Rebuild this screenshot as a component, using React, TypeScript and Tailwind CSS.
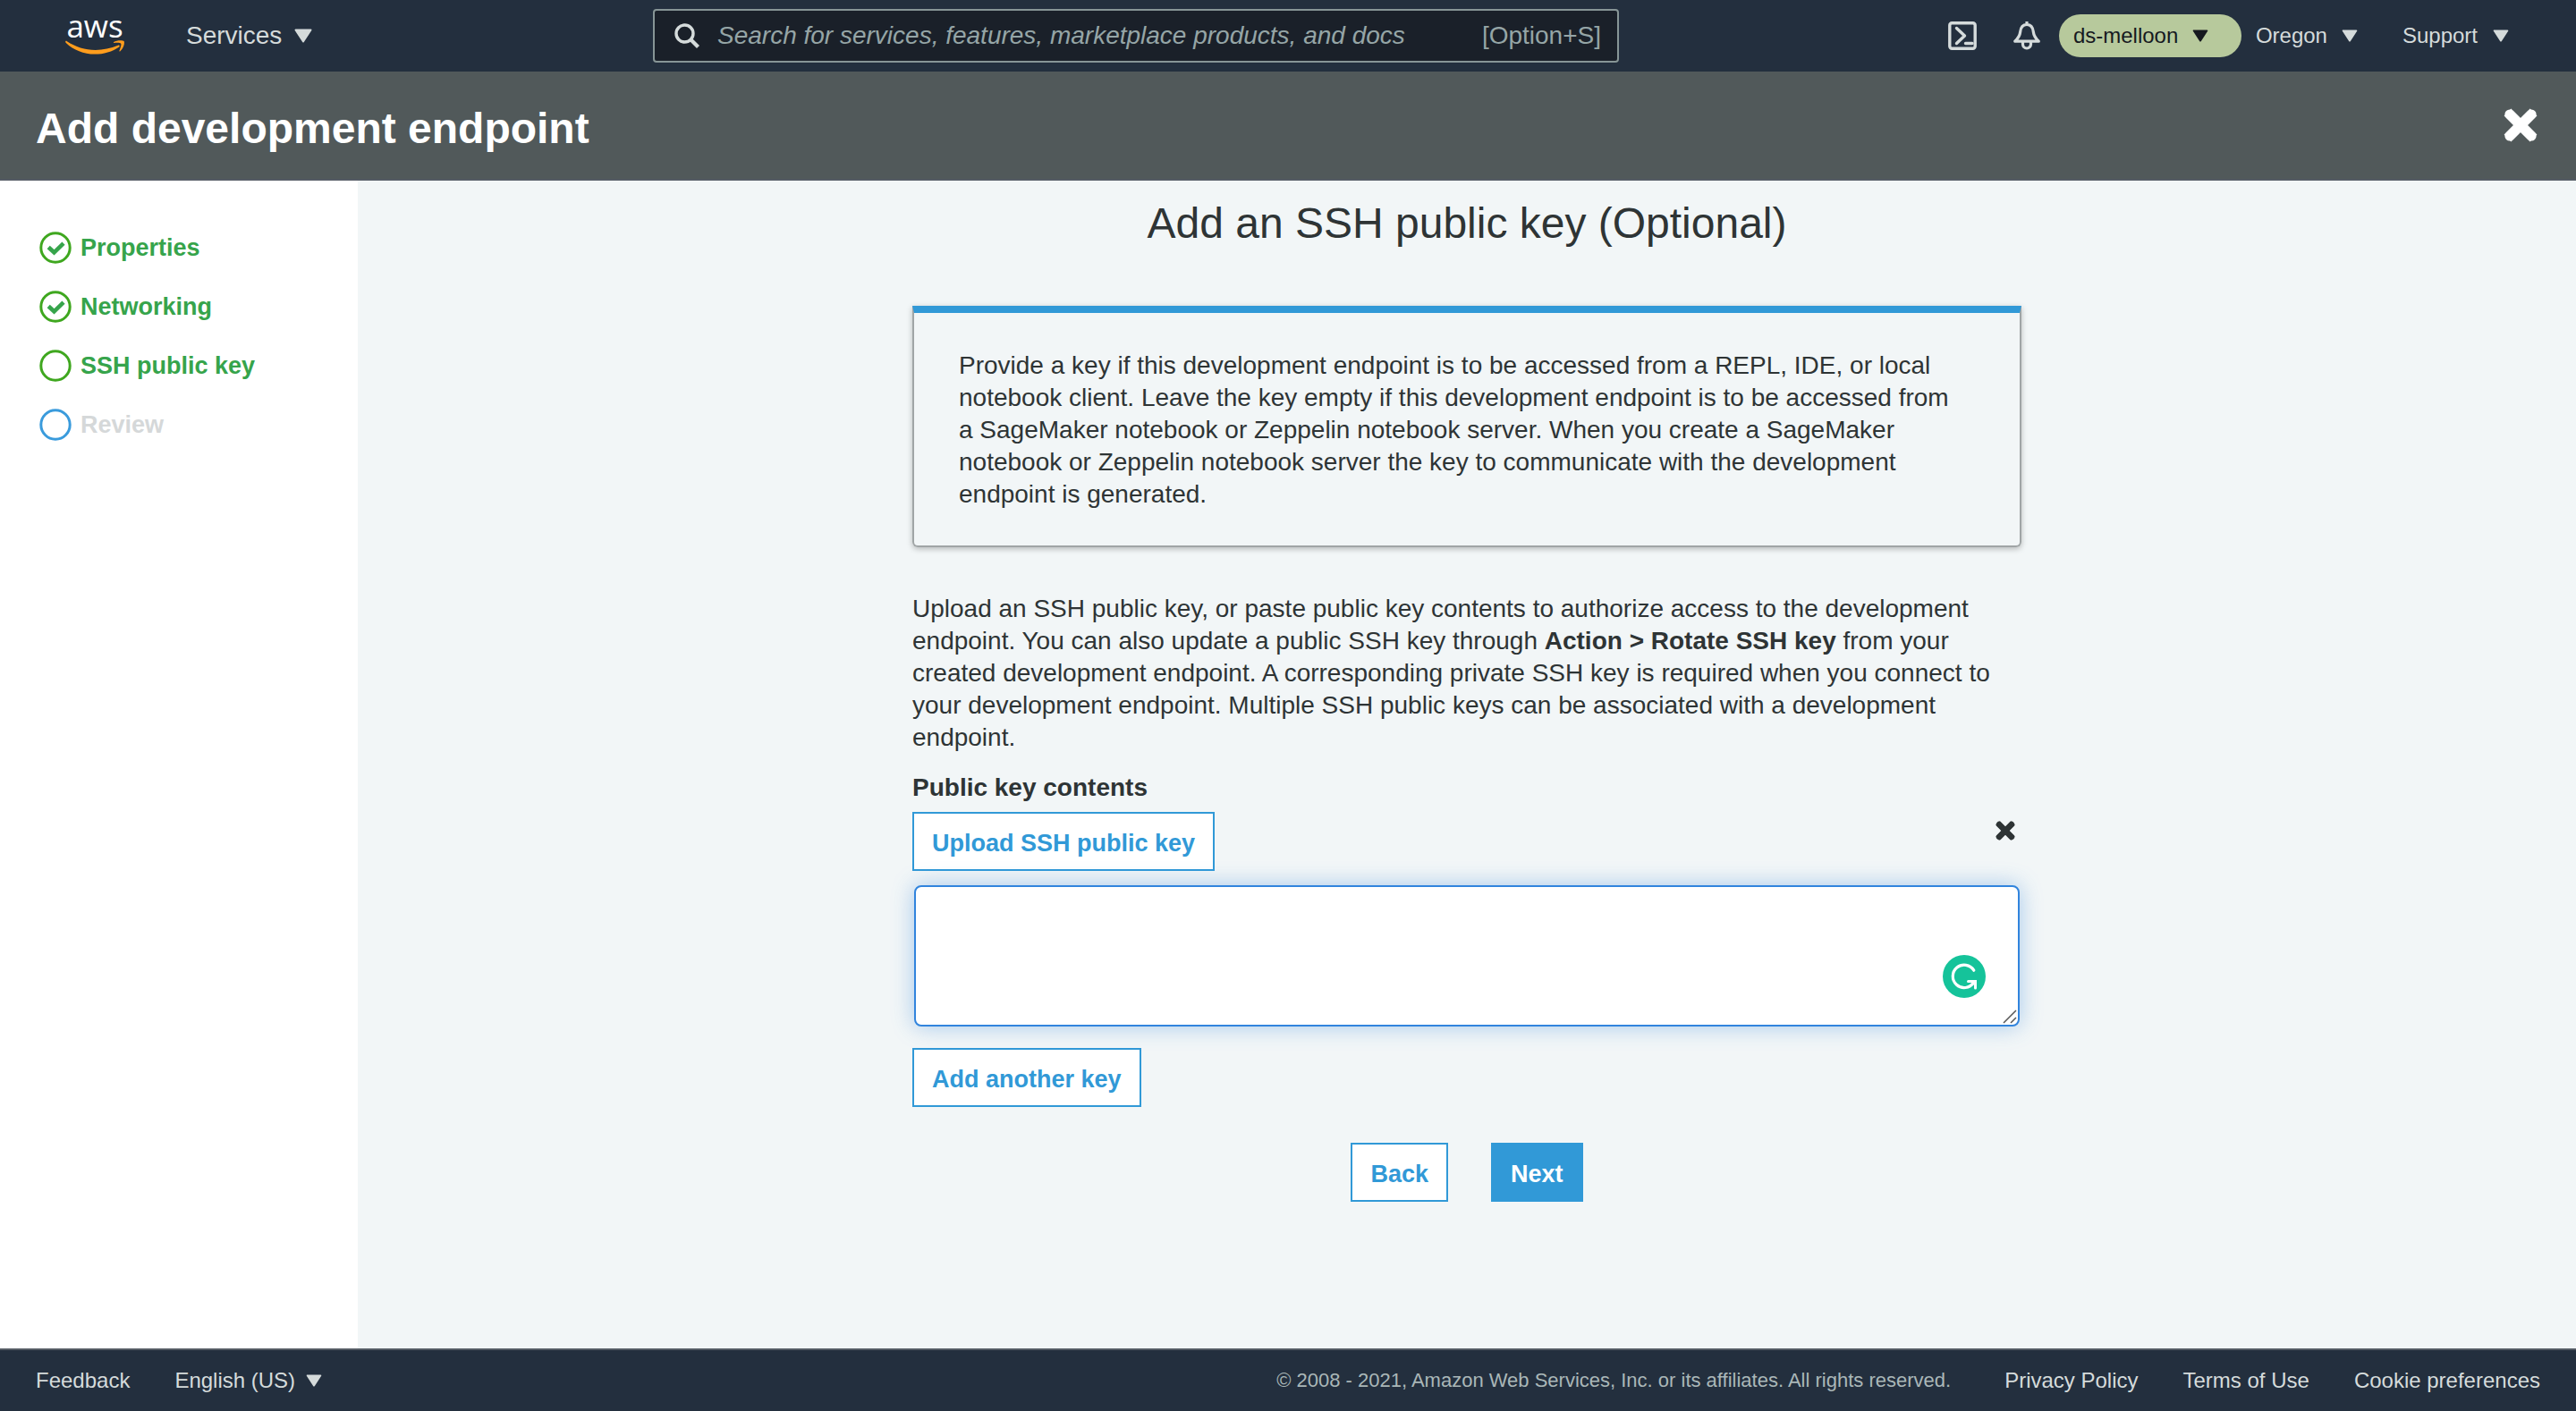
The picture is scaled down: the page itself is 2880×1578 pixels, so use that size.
import type { ReactNode } from "react";

function Caret({ className }: { className: string }) {
  return (
    <svg viewBox="0 0 20 16" className={className} fill="currentColor" stroke="currentColor" strokeWidth="2" strokeLinejoin="round" aria-hidden="true">
      <path d="M1.500 1.500h17L10 14.500z" />
    </svg>
  );
}

function Cross({ className }: { className: string }) {
  return (
    <svg viewBox="0 0 22 22" className={className} stroke="currentColor" strokeWidth="6.400" aria-hidden="true">
      <path d="M2.600 2.600l16.800 16.800M19.400 2.600L2.600 19.400" />
      <path d="M4 4l14 14M18 4L4 18" strokeLinecap="round" />
    </svg>
  );
}

function AwsLogo() {
  return (
    <a href="#home" aria-label="AWS" className="flex w-[68px] flex-col items-center pb-[6px] text-white">
      <span className="h-8 font-['Open_Sans',sans-serif] text-[35px] leading-8 font-medium">aws</span>
      <svg viewBox="0 0 66 16" className="h-4 w-[66px]" fill="#ff9d1d" aria-hidden="true">
        <path d="M.3 1.200C-.1 1.900.2 2.400.8 3 9.500 11.200 20.500 15.600 33 15.600c9.500 0 20-3 27.200-8.200 1.200-.9.200-2.300-1.300-1.700C51 9 42 10.900 33.800 10.900 22.200 10.900 11.200 7.300 1.900 1.200 1.300.8.700.7.300 1.200z" />
        <path d="M54.200 1.900C57.500-.3 64.500-.2 65.600 1.100c1.100 1.400-.3 8-4.200 11.100-.7.500-1.300.2-1-.5.900-2.200 2.700-6.800 1.800-8-.9-1.200-5.400-.9-7.600-.6-.8.100-.9-.6-.4-1.200z" />
      </svg>
    </a>
  );
}

type StepState = "done" | "current" | "todo";

const steps: { label: string; state: StepState }[] = [
  { label: "Properties", state: "done" },
  { label: "Networking", state: "done" },
  { label: "SSH public key", state: "current" },
  { label: "Review", state: "todo" },
];

function StepIcon({ state }: { state: StepState }) {
  return (
    <svg viewBox="0 0 36 36" className="size-9" fill="none" aria-hidden="true">
      <circle cx="18" cy="18" r="16.200" stroke={state === "todo" ? "#3a9bdc" : "#3fa71f"} strokeWidth="3" />
      {state === "done" && <path d="M10.200 17.500l6.300 5.800L27 13.200" stroke="#36a44b" strokeWidth="4.600" />}
    </svg>
  );
}

function OutlineButton({ children }: { children: ReactNode }) {
  return (
    <button type="button" className="h-[66px] border-2 border-[#3199d7] bg-white px-5 pt-[3px] text-[27px] font-bold text-[#3199d7]">
      {children}
    </button>
  );
}

export default function App() {
  return (
    <div className="flex min-h-screen flex-col bg-[#f2f6f7] font-['Liberation_Sans',Arial,sans-serif] text-[28px] leading-9 text-[#2e3435]">
      <header className="flex h-20 items-center bg-[#232f3e] text-[#d5dbdb]">
        <div className="flex w-[730px] shrink-0 items-center pl-[72px]">
          <AwsLogo />
          <button type="button" className="ml-[68px] flex items-center gap-[14px]">
            Services
            <Caret className="h-4 w-5" />
          </button>
        </div>
        <div className="flex h-[60px] w-[1080px] items-center rounded-[4px] border-2 border-[#879596] bg-[#1a2029] pr-[18px] pl-[22px] text-[#95a5a6]">
          <svg viewBox="0 0 28 28" className="size-7 shrink-0" fill="none" stroke="#d5dbdb" strokeWidth="3.400" aria-hidden="true">
            <circle cx="11.500" cy="11.500" r="9.500" />
            <path d="M18.500 18.500l8 8" strokeWidth="4.200" />
          </svg>
          <input
            type="search"
            aria-label="Search"
            placeholder="Search for services, features, marketplace products, and docs"
            className="ml-5 min-w-0 flex-1 bg-transparent italic outline-none placeholder:text-[#95a5a6]"
          />
          <span>[Option+S]</span>
        </div>
        <div className="flex flex-1 items-center justify-end pr-[75px] text-[24px]">
          <button type="button" aria-label="CloudShell">
            <svg viewBox="0 0 32 32" className="size-8" fill="none" stroke="currentColor" strokeWidth="3.400" strokeLinecap="round" strokeLinejoin="round" aria-hidden="true">
              <rect x="1.800" y="1.800" width="28.400" height="28.400" rx="2.500" />
              <path d="M9.500 7.500l9 8.500-9 8.500M19.500 24.500H27" />
            </svg>
          </button>
          <button type="button" aria-label="Notifications" className="ml-10">
            <svg viewBox="0 0 32 32" className="size-8" fill="none" stroke="currentColor" strokeWidth="3.200" strokeLinejoin="round" aria-hidden="true">
              <path d="M16 0v4M16 3.500c-4.600 0-6.800 3.500-7.300 8-.5 4.800-2.200 7.200-6 10.700h26.600c-3.800-3.500-5.500-5.900-6-10.700-.5-4.500-2.700-8-7.300-8z" />
              <path d="M11.500 22.500v3a4.500 4.500 0 0 0 9 0v-3" />
            </svg>
          </button>
          <button type="button" className="ml-5 flex h-12 w-[204px] items-center gap-4 rounded-full bg-[#b7c99c] pl-4 text-[#16191f]">
            ds-melloon
            <Caret className="h-[14px] w-[18px]" />
          </button>
          <button type="button" className="ml-4 flex items-center gap-4">
            Oregon
            <Caret className="h-[14px] w-[18px]" />
          </button>
          <button type="button" className="ml-[50px] flex items-center gap-[17px]">
            Support
            <Caret className="h-[14px] w-[18px]" />
          </button>
        </div>
      </header>

      <div className="flex h-[122px] items-center justify-between border-b-2 border-[#545b64] bg-[#51595a] pr-[43px] pl-10 text-white">
        <h1 className="pt-2 text-[48px] leading-[56px] font-bold">Add development endpoint</h1>
        <button type="button" aria-label="Close">
          <Cross className="size-[38px]" />
        </button>
      </div>

      <div className="flex flex-1">
        <nav aria-label="Steps" className="w-[400px] shrink-0 bg-white pt-[57px] pl-11">
          <ol className="flex flex-col gap-[30px] text-[27px] font-bold">
            {steps.map((step) => (
              <li key={step.label}>
                <a
                  href="#step"
                  className={
                    step.state === "todo"
                      ? "flex items-center gap-[10px] text-[#d5d8d9]"
                      : "flex items-center gap-[10px] text-[#36a44b]"
                  }
                >
                  <StepIcon state={step.state} />
                  {step.label}
                </a>
              </li>
            ))}
          </ol>
        </nav>

        <main className="flex flex-1 flex-col items-center pt-5">
          <h2 className="text-[48px] leading-[56px]">Add an SSH public key (Optional)</h2>
          <div className="mt-16 w-full max-w-[1240px]">
            <p className="rounded-b-[6px] border-2 border-t-8 border-[#a0a5a6] border-t-[#3199d7] pt-[41px] pr-[60px] pb-[39px] pl-[50px] shadow-[0_2px_6px_rgba(0,0,0,0.25)]">
              Provide a key if this development endpoint is to be accessed from a REPL, IDE, or local notebook client. Leave the key empty if this development endpoint is to be accessed from a SageMaker notebook or Zeppelin notebook server. When you create a SageMaker notebook or Zeppelin notebook server the key to communicate with the development endpoint is generated.
            </p>
            <p className="mt-[51px]">
              Upload an SSH public key, or paste public key contents to authorize access to the development endpoint. You can also update a public SSH key through <b>Action &gt; Rotate SSH key</b> from your created development endpoint. A corresponding private SSH key is required when you connect to your development endpoint. Multiple SSH public keys can be associated with a development endpoint.
            </p>
            <label htmlFor="public-key" className="mt-5 block font-bold">
              Public key contents
            </label>
            <div className="mt-[9px] flex items-start justify-between pr-[7px]">
              <OutlineButton>Upload SSH public key</OutlineButton>
              <button type="button" aria-label="Remove key" className="mt-[10px]">
                <Cross className="size-[22px]" />
              </button>
            </div>
            <div className="relative mx-[2px] mt-4">
              <textarea
                id="public-key"
                className="block h-[158px] w-full resize-none rounded-[8px] border-2 border-[#3184dd] bg-white p-4 shadow-[0_0_24px_rgba(49,132,221,0.4)] outline-none"
              />
              <svg viewBox="0 0 48 48" className="absolute right-[38px] bottom-8 size-12" fill="none" aria-hidden="true">
                <circle cx="24" cy="24" r="24" fill="#15c39a" />
                <path d="M34.800 17.200A12.700 12.700 0 1 0 34.500 31" stroke="#fff" strokeWidth="3.200" strokeLinecap="round" />
                <path d="M28.500 29.400h8v7.600" stroke="#fff" strokeWidth="3" strokeLinecap="round" />
                <path d="M36.500 29.400l-5 1 4.500 4z" fill="#fff" />
              </svg>
              <svg viewBox="0 0 16 16" className="absolute right-[3px] bottom-[3px] size-4" stroke="#555" strokeWidth="1.500" aria-hidden="true">
                <path d="M1 15L15 1M9 15l6-6" />
              </svg>
            </div>
            <div className="mt-6">
              <OutlineButton>Add another key</OutlineButton>
            </div>
            <div className="mt-10 flex justify-center gap-12">
              <OutlineButton>Back</OutlineButton>
              <button type="button" className="h-[66px] bg-[#3199d7] px-[22px] pt-[3px] text-[27px] font-bold text-white">
                Next
              </button>
            </div>
          </div>
        </main>
      </div>

      <footer className="flex h-[70px] items-center border-t-2 border-[#545b64] bg-[#232f3e] px-10 text-[24px] text-[#d5dbdb]">
        <a href="#feedback">Feedback</a>
        <button type="button" className="ml-[50px] flex items-center gap-3">
          English (US)
          <Caret className="h-[14px] w-[18px]" />
        </button>
        <span className="ml-auto text-[22px] text-[#aab7b8]">© 2008 - 2021, Amazon Web Services, Inc. or its affiliates. All rights reserved.</span>
        <nav aria-label="Legal" className="ml-[60px] flex gap-[50px]">
          <a href="#privacy">Privacy Policy</a>
          <a href="#terms">Terms of Use</a>
          <a href="#cookies">Cookie preferences</a>
        </nav>
      </footer>
    </div>
  );
}
